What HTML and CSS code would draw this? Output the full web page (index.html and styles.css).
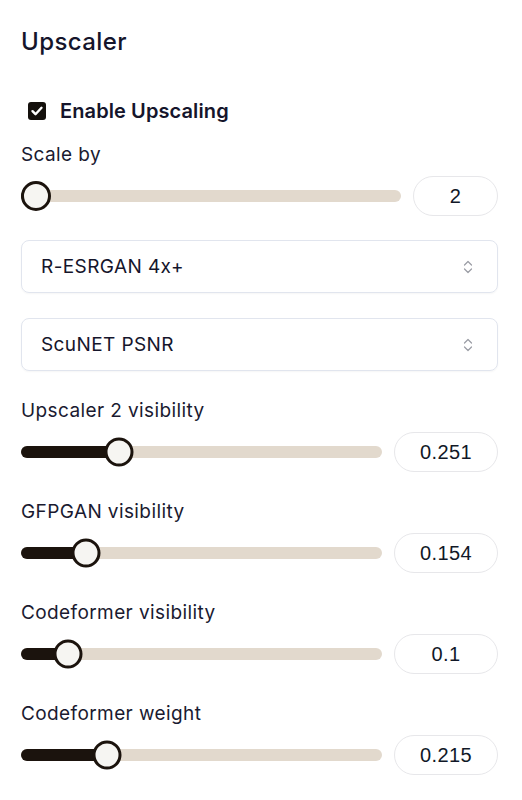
FILE: index.html
```html
<!DOCTYPE html>
<html>
<head>
<meta charset="utf-8">
<link rel="stylesheet" href="styles.css">
</head>
<body>
<div class="panel">
  <h2 class="title">Upscaler</h2>
  <label class="check">
    <span class="box"><svg viewBox="0 0 18 18" width="18" height="18"><path d="M4.5 9.2l3 3 6-6.4" fill="none" stroke="#fff" stroke-width="2.4" stroke-linecap="round" stroke-linejoin="round"/></svg></span>
    <span class="check-text">Enable Upscaling</span>
  </label>

  <div class="field first">
    <div class="label">Scale by</div>
    <div class="row">
      <div class="slider big"><div class="rail"><div class="fill" style="width:calc(0% + 15px)"></div><div class="thumb" style="left:0%"></div></div></div>
      <div class="num narrow">2</div>
    </div>
  </div>

  <div class="select">
    <span>R-ESRGAN 4x+</span>
    <svg class="chev" viewBox="0 0 10 16" width="10" height="16"><path d="M1.5 6L5 2.5 8.5 6M1.5 10L5 13.5 8.5 10" fill="none" stroke="#9a9ca4" stroke-width="1.2" stroke-linecap="round" stroke-linejoin="round"/></svg>
  </div>
  <div class="select">
    <span>ScuNET PSNR</span>
    <svg class="chev" viewBox="0 0 10 16" width="10" height="16"><path d="M1.5 6L5 2.5 8.5 6M1.5 10L5 13.5 8.5 10" fill="none" stroke="#9a9ca4" stroke-width="1.2" stroke-linecap="round" stroke-linejoin="round"/></svg>
  </div>

  <div class="field">
    <div class="label">Upscaler 2 visibility</div>
    <div class="row">
      <div class="slider"><div class="rail"><div class="fill" style="width:calc(25.1% + 14px)"></div><div class="thumb" style="left:25.1%"></div></div></div>
      <div class="num">0.251</div>
    </div>
  </div>
  <div class="field">
    <div class="label">GFPGAN visibility</div>
    <div class="row">
      <div class="slider"><div class="rail"><div class="fill" style="width:calc(15.4% + 14px)"></div><div class="thumb" style="left:15.4%"></div></div></div>
      <div class="num">0.154</div>
    </div>
  </div>
  <div class="field">
    <div class="label">Codeformer visibility</div>
    <div class="row">
      <div class="slider"><div class="rail"><div class="fill" style="width:calc(10% + 14px)"></div><div class="thumb" style="left:10%"></div></div></div>
      <div class="num">0.1</div>
    </div>
  </div>
  <div class="field">
    <div class="label">Codeformer weight</div>
    <div class="row">
      <div class="slider"><div class="rail"><div class="fill" style="width:calc(21.5% + 14px)"></div><div class="thumb" style="left:21.5%"></div></div></div>
      <div class="num">0.215</div>
    </div>
  </div>
</div>
</body>
</html>
```
FILE: styles.css
```css
* { box-sizing: border-box; }
body {
  margin: 0;
  background: #ffffff;
  font-family: Inter, "Noto Sans", sans-serif;
  color: #15152b;
}
.panel {
  padding: 27px 24px 0 21px;
}
.title {
  margin: 0;
  font-size: 24px;
  font-weight: 500;
  line-height: 30px;
  letter-spacing: 0.4px;
}
.check {
  display: flex;
  align-items: center;
  gap: 14px;
  margin-top: 42px;
  padding-left: 7px;
}
.box {
  width: 18px;
  height: 18px;
  border-radius: 3px;
  background: #14100c;
  display: flex;
}
.check-text {
  font-size: 20px;
  font-weight: 600;
  line-height: 24px;
  letter-spacing: 0.1px;
}
.field {
  margin-top: 28px;
}
.field.first {
  margin-top: 20px;
}
.label {
  font-size: 19px;
  line-height: 24px;
  letter-spacing: 0.4px;
  color: #1a1a30;
}
.row {
  display: flex;
  align-items: center;
  gap: 12px;
  margin-top: 9px;
}
.slider {
  flex: 1;
  height: 12px;
  border-radius: 6px;
  background: #e2d9cd;
  padding: 0 14px;
}
.slider.big {
  padding: 0 15px;
}
.rail {
  position: relative;
  height: 100%;
}
.fill {
  position: absolute;
  left: -14px;
  top: 0;
  bottom: 0;
  border-radius: 6px;
  background: #1b130d;
}
.slider.big .fill {
  left: -15px;
}
.thumb {
  position: absolute;
  top: 50%;
  width: 29px;
  height: 29px;
  transform: translate(-50%, -50%);
  border: 3px solid #1b130d;
  border-radius: 50%;
  background: #f6f5f2;
}
.slider.big .thumb {
  width: 30px;
  height: 30px;
}
.num {
  width: 104px;
  height: 40px;
  border: 1px solid #e7e7ea;
  border-radius: 20px;
  display: flex;
  align-items: center;
  justify-content: center;
  font-family: "Liberation Sans", Arial, sans-serif;
  font-size: 20px;
  letter-spacing: 0.4px;
  color: #111827;
}
.num.narrow {
  width: 85px;
}
.select {
  margin-top: 24px;
  height: 53px;
  border: 1px solid #e1e5ee;
  border-radius: 8px;
  display: flex;
  align-items: center;
  justify-content: space-between;
  padding: 0 24px 0 19px;
  font-size: 19px;
  letter-spacing: 0.4px;
  box-shadow: 0 1px 2px rgba(0,0,0,0.04);
}
.select + .select {
  margin-top: 25px;
}
.chev { display: block; }
```
